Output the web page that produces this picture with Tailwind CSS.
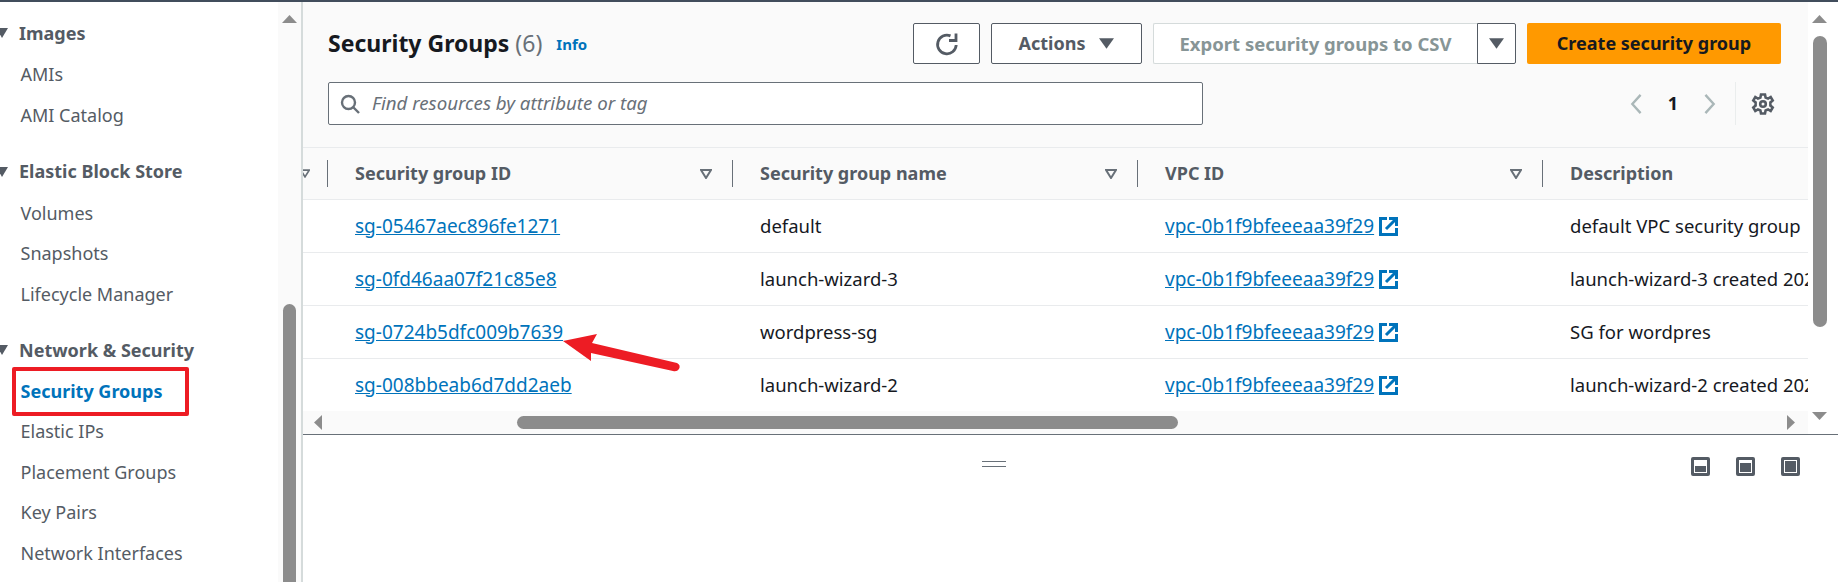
<!DOCTYPE html>
<html lang="en">
<head>
  <meta charset="UTF-8" />
  <title>Security Groups</title>
  <script src="https://cdn.jsdelivr.net/npm/@tailwindcss/browser@4"></script>
</head>
<body class="relative h-[582px] w-[1838px] overflow-hidden bg-white font-['Noto_Sans',sans-serif] text-[18px] text-[#16191f]">
  <div class="h-[2px] bg-[#414d5c]"></div>
  <div class="flex h-[580px]">

    <!-- Sidebar -->
    <aside class="relative h-full w-[303px] shrink-0 border-r-2 border-[#d5dbdb] bg-white pt-[11px] text-[#545b64]">
      <div class="absolute right-0 top-0 h-full w-[23px] bg-[#fafafa]"></div>
      <div class="flex h-[40.6px] items-center gap-[11px] font-bold">
        <svg class="h-[10px] w-[8px]" viewBox="0 0 8 10"><path d="M0 0H8L2 10L0 6.500Z" fill="#545b64"/></svg>
        <span>Images</span>
      </div>
      <a class="mt-[1px] flex h-[40.6px] items-center pl-[20.500px]">AMIs</a>
      <a class="flex h-[40.6px] items-center pl-[20.500px]">AMI Catalog</a>

      <div class="mt-[15.5px] flex h-[40.6px] items-center gap-[11px] font-bold">
        <svg class="h-[10px] w-[8px]" viewBox="0 0 8 10"><path d="M0 0H8L2 10L0 6.500Z" fill="#545b64"/></svg>
        <span>Elastic Block Store</span>
      </div>
      <a class="mt-[1px] flex h-[40.6px] items-center pl-[20.500px]">Volumes</a>
      <a class="flex h-[40.6px] items-center pl-[20.500px]">Snapshots</a>
      <a class="flex h-[40.6px] items-center pl-[20.500px]">Lifecycle Manager</a>

      <div class="mt-[15.5px] flex h-[40.6px] items-center gap-[11px] font-bold">
        <svg class="h-[10px] w-[8px]" viewBox="0 0 8 10"><path d="M0 0H8L2 10L0 6.500Z" fill="#545b64"/></svg>
        <span>Network &amp; Security</span>
      </div>
      <a class="flex h-[40.6px] items-center pl-[20.500px] font-bold text-[#0073bb]">Security Groups</a>
      <a class="flex h-[40.6px] items-center pl-[20.500px]">Elastic IPs</a>
      <a class="flex h-[40.6px] items-center pl-[20.500px]">Placement Groups</a>
      <a class="flex h-[40.6px] items-center pl-[20.500px]">Key Pairs</a>
      <a class="flex h-[40.6px] items-center pl-[20.500px]">Network Interfaces</a>

      <!-- sidebar scrollbar -->
      <svg class="absolute left-[282px] top-[13px] h-[8px] w-[15px]" viewBox="0 0 15 8"><path d="M7.500 0L15 8H0Z" fill="#8c8c8c"/></svg>
      <div class="absolute left-[283px] top-[302px] h-[290px] w-[13px] rounded-t-full bg-[#8c8c8c]"></div>
    </aside>

    <!-- Main -->
    <main class="relative min-w-0 flex-1">
      <div class="w-[1505px] overflow-hidden">
        <!-- Header -->
        <header class="h-[146px] border-b border-[#e9ebed] bg-[#fafafa] pl-[25px] pr-[27px] pt-[21px]">
          <div class="flex h-[41px] items-center">
            <h1 class="-mt-[1px] text-[23px] font-bold leading-none">Security Groups <span class="font-normal text-[#687078]">(6)</span></h1>
            <a class="ml-[14px] mt-[2px] text-[15px] font-bold text-[#0073bb]">Info</a>
            <button class="ml-auto flex h-[41px] w-[67px] items-center justify-center rounded-[2px] border border-[#545b64] bg-white">
              <svg class="h-[24px] w-[24px]" viewBox="0 0 24 24" fill="none" stroke="#545b64" stroke-width="2.800"><path d="M15.500 3.900A9.300 9.300 0 1 0 21.200 13"/><path d="M21 1.500V8.500H14"/></svg>
            </button>
            <button class="ml-[11px] flex h-[41px] w-[151px] items-center justify-center gap-[14px] rounded-[2px] border border-[#545b64] bg-white font-bold text-[#545b64]">
              Actions
              <svg class="h-[11px] w-[15px]" viewBox="0 0 14 10"><path d="M0 0H14L7 10Z" fill="#545b64"/></svg>
            </button>
            <div class="ml-[11px] flex h-[41px] w-[363px]">
              <button class="flex-1 whitespace-nowrap rounded-l-[2px] border border-r-0 border-[#d5dbdb] bg-white text-[18.5px] font-bold text-[#879596]">Export security groups to CSV</button>
              <button class="flex w-[39px] items-center justify-center rounded-r-[2px] border border-[#545b64] bg-white">
                <svg class="h-[11px] w-[15px]" viewBox="0 0 14 10"><path d="M0 0H14L7 10Z" fill="#545b64"/></svg>
              </button>
            </div>
            <button class="ml-[11px] h-[41px] w-[254px] rounded-[2px] bg-[#ff9900] font-bold text-[#16191f]">Create security group</button>
          </div>
          <div class="mt-[18px] flex h-[43px] items-center">
            <div class="flex h-[43px] w-[875px] items-center gap-[12px] rounded-[2px] border border-[#687078] bg-white pl-[11px]">
              <svg class="h-[20px] w-[20px]" viewBox="0 0 20 20" fill="none" stroke="#687078" stroke-width="2.400"><circle cx="8.500" cy="8.500" r="6.500"/><path d="M13 13l6 6"/></svg>
              <span class="text-[18.7px] italic text-[#687078]">Find resources by attribute or tag</span>
            </div>
            <div class="ml-auto flex h-[43px] items-center">
              <svg class="h-[22px] w-[14px]" viewBox="0 0 14 24" fill="none" stroke="#aab7b8" stroke-width="2.600"><path d="M12 2L3 12l9 10"/></svg>
              <span class="mx-[25px] font-bold">1</span>
              <svg class="h-[22px] w-[14px]" viewBox="0 0 14 24" fill="none" stroke="#aab7b8" stroke-width="2.600"><path d="M2 2l9 10-9 10"/></svg>
              <div class="ml-[18px] flex h-full w-[46px] items-center justify-center border-l border-[#eaeded] pl-[8px]">
                <svg class="h-[24px] w-[24px]" viewBox="0 0 24 24" fill="none" stroke="#545b64" stroke-width="2.600"><circle cx="12" cy="12" r="2.800"/><path d="M10 2.500h4l.6 3 2.500 1.100 2.600-1.600 2 3.400-2.300 2v3.200l2.300 2-2 3.400-2.600-1.600-2.500 1.100-.6 3h-4l-.6-3-2.500-1.100-2.600 1.600-2-3.400 2.300-2v-3.200l-2.300-2 2-3.400 2.600 1.600 2.500-1.100z"/></svg>
              </div>
            </div>
          </div>
        </header>

        <!-- Table head -->
        <div class="grid h-[52px] grid-cols-[25px_405px_405px_405px_1fr] items-center border-b border-[#e9ebed] bg-[#fafafa] font-bold text-[#545b64]">
          <div class="flex h-[27px] items-center justify-between border-r border-[#687078]">
            <svg class="-ml-[3px] h-[9px] w-[10px]" viewBox="0 0 12 10" fill="none" stroke="#687078" stroke-width="2"><path d="M1 1h10L6 9Z"/></svg>
          </div>
          <div class="flex h-[27px] items-center justify-between border-r border-[#687078] pl-[27px] pr-[20px]">
            <span>Security group ID</span>
            <svg class="h-[10px] w-[12px]" viewBox="0 0 12 10" fill="none" stroke="#687078" stroke-width="2"><path d="M1 1h10L6 9Z"/></svg>
          </div>
          <div class="flex h-[27px] items-center justify-between border-r border-[#687078] pl-[27px] pr-[20px]">
            <span>Security group name</span>
            <svg class="h-[10px] w-[12px]" viewBox="0 0 12 10" fill="none" stroke="#687078" stroke-width="2"><path d="M1 1h10L6 9Z"/></svg>
          </div>
          <div class="flex h-[27px] items-center justify-between border-r border-[#687078] pl-[27px] pr-[20px]">
            <span>VPC ID</span>
            <svg class="h-[10px] w-[12px]" viewBox="0 0 12 10" fill="none" stroke="#687078" stroke-width="2"><path d="M1 1h10L6 9Z"/></svg>
          </div>
          <div class="pl-[27px]">Description</div>
        </div>

        <!-- Rows -->
        <div class="grid h-[53px] grid-cols-[25px_405px_405px_405px_1fr] items-center border-b border-[#e9ebed] text-[18.5px]">
          <div></div>
          <a class="pl-[27px] text-[19px] text-[#0073bb] underline">sg-05467aec896fe1271</a>
          <div class="pl-[27px]">default</div>
          <a class="flex items-center gap-[1px] pl-[27px] text-[19px] text-[#0073bb]"><span class="pr-[4px] underline">vpc-0b1f9bfeeeaa39f29</span>
            <svg class="h-[19px] w-[19px]" viewBox="0 0 19 19" fill="none" stroke="#0073bb" stroke-width="3"><path d="M8 1.500H1.500V17.500H17.500V11"/><path d="M7 12L16.500 2.500M10 1.500H17.500V9"/></svg></a>
          <div class="overflow-hidden whitespace-nowrap pl-[27px]">default VPC security group</div>
        </div>
        <div class="grid h-[53px] grid-cols-[25px_405px_405px_405px_1fr] items-center border-b border-[#e9ebed] text-[18.5px]">
          <div></div>
          <a class="pl-[27px] text-[19px] text-[#0073bb] underline">sg-0fd46aa07f21c85e8</a>
          <div class="pl-[27px]">launch-wizard-3</div>
          <a class="flex items-center gap-[1px] pl-[27px] text-[19px] text-[#0073bb]"><span class="pr-[4px] underline">vpc-0b1f9bfeeeaa39f29</span>
            <svg class="h-[19px] w-[19px]" viewBox="0 0 19 19" fill="none" stroke="#0073bb" stroke-width="3"><path d="M8 1.500H1.500V17.500H17.500V11"/><path d="M7 12L16.500 2.500M10 1.500H17.500V9"/></svg></a>
          <div class="overflow-hidden whitespace-nowrap pl-[27px]">launch-wizard-3 created 2023</div>
        </div>
        <div class="grid h-[53px] grid-cols-[25px_405px_405px_405px_1fr] items-center border-b border-[#e9ebed] text-[18.5px]">
          <div></div>
          <a class="pl-[27px] text-[19px] text-[#0073bb] underline">sg-0724b5dfc009b7639</a>
          <div class="pl-[27px]">wordpress-sg</div>
          <a class="flex items-center gap-[1px] pl-[27px] text-[19px] text-[#0073bb]"><span class="pr-[4px] underline">vpc-0b1f9bfeeeaa39f29</span>
            <svg class="h-[19px] w-[19px]" viewBox="0 0 19 19" fill="none" stroke="#0073bb" stroke-width="3"><path d="M8 1.500H1.500V17.500H17.500V11"/><path d="M7 12L16.500 2.500M10 1.500H17.500V9"/></svg></a>
          <div class="overflow-hidden whitespace-nowrap pl-[27px]">SG for wordpres</div>
        </div>
        <div class="grid h-[52px] grid-cols-[25px_405px_405px_405px_1fr] items-center text-[18.5px]">
          <div></div>
          <a class="pl-[27px] text-[19px] text-[#0073bb] underline">sg-008bbeab6d7dd2aeb</a>
          <div class="pl-[27px]">launch-wizard-2</div>
          <a class="flex items-center gap-[1px] pl-[27px] text-[19px] text-[#0073bb]"><span class="pr-[4px] underline">vpc-0b1f9bfeeeaa39f29</span>
            <svg class="h-[19px] w-[19px]" viewBox="0 0 19 19" fill="none" stroke="#0073bb" stroke-width="3"><path d="M8 1.500H1.500V17.500H17.500V11"/><path d="M7 12L16.500 2.500M10 1.500H17.500V9"/></svg></a>
          <div class="overflow-hidden whitespace-nowrap pl-[27px]">launch-wizard-2 created 2023</div>
        </div>
      </div>

      <!-- Horizontal scrollbar -->
      <div class="relative h-[23px] w-[1505px] bg-[#fafafa]">
        <svg class="absolute left-[11px] top-[4px] h-[15px] w-[8px]" viewBox="0 0 8 15"><path d="M8 0V15L0 7.500Z" fill="#8c8c8c"/></svg>
        <div class="absolute left-[214px] top-[5px] h-[13px] w-[661px] rounded-full bg-[#8c8c8c]"></div>
        <svg class="absolute left-[1484px] top-[4px] h-[15px] w-[8px]" viewBox="0 0 8 15"><path d="M0 0V15L8 7.500Z" fill="#8c8c8c"/></svg>
      </div>

      <!-- Split panel -->
      <div class="relative h-[147px] border-t border-[#687078] bg-white">
        <div class="absolute left-[679px] top-[26px] h-[6px] w-[24px] border-y border-[#687078]"></div>
        <div class="absolute left-[1387.500px] top-[22px] flex gap-[26px]">
          <div class="flex h-[19px] w-[19px] items-end rounded-[2px] border-[3px] border-[#545b64] p-[1px]"><div class="h-[6px] w-full bg-[#545b64]"></div></div>
          <div class="flex h-[19px] w-[19px] items-end rounded-[2px] border-[3px] border-[#545b64] p-[1px]"><div class="h-[9px] w-full bg-[#545b64]"></div></div>
          <div class="flex h-[19px] w-[19px] items-end rounded-[2px] border-[3px] border-[#545b64] p-[1px]"><div class="h-full w-full bg-[#545b64]"></div></div>
        </div>
      </div>

      <!-- Main vertical scrollbar -->
      <svg class="absolute left-[1509px] top-[13px] h-[8px] w-[15px]" viewBox="0 0 15 8"><path d="M7.500 0L15 8H0Z" fill="#8c8c8c"/></svg>
      <div class="absolute left-[1510px] top-[34px] h-[291px] w-[14px] rounded-full bg-[#8c8c8c]"></div>
      <svg class="absolute left-[1509px] top-[410px] h-[8px] w-[15px]" viewBox="0 0 15 8"><path d="M7.500 8L15 0H0Z" fill="#8c8c8c"/></svg>
    </main>
  </div>

  <!-- Annotations -->
  <div class="absolute left-[12px] top-[367px] h-[49px] w-[177px] rounded-[2px] border-[4px] border-[#ed1c24]"></div>
  <svg class="absolute left-[560px] top-[330px] h-[50px] w-[125px]" viewBox="0 0 125 50">
    <path d="M3 11L37 4L32 13L117 33Q121 35 119 39Q117 42 113 41L31 23L31 31Z" fill="#ed1c24"/>
  </svg>
</body>
</html>
